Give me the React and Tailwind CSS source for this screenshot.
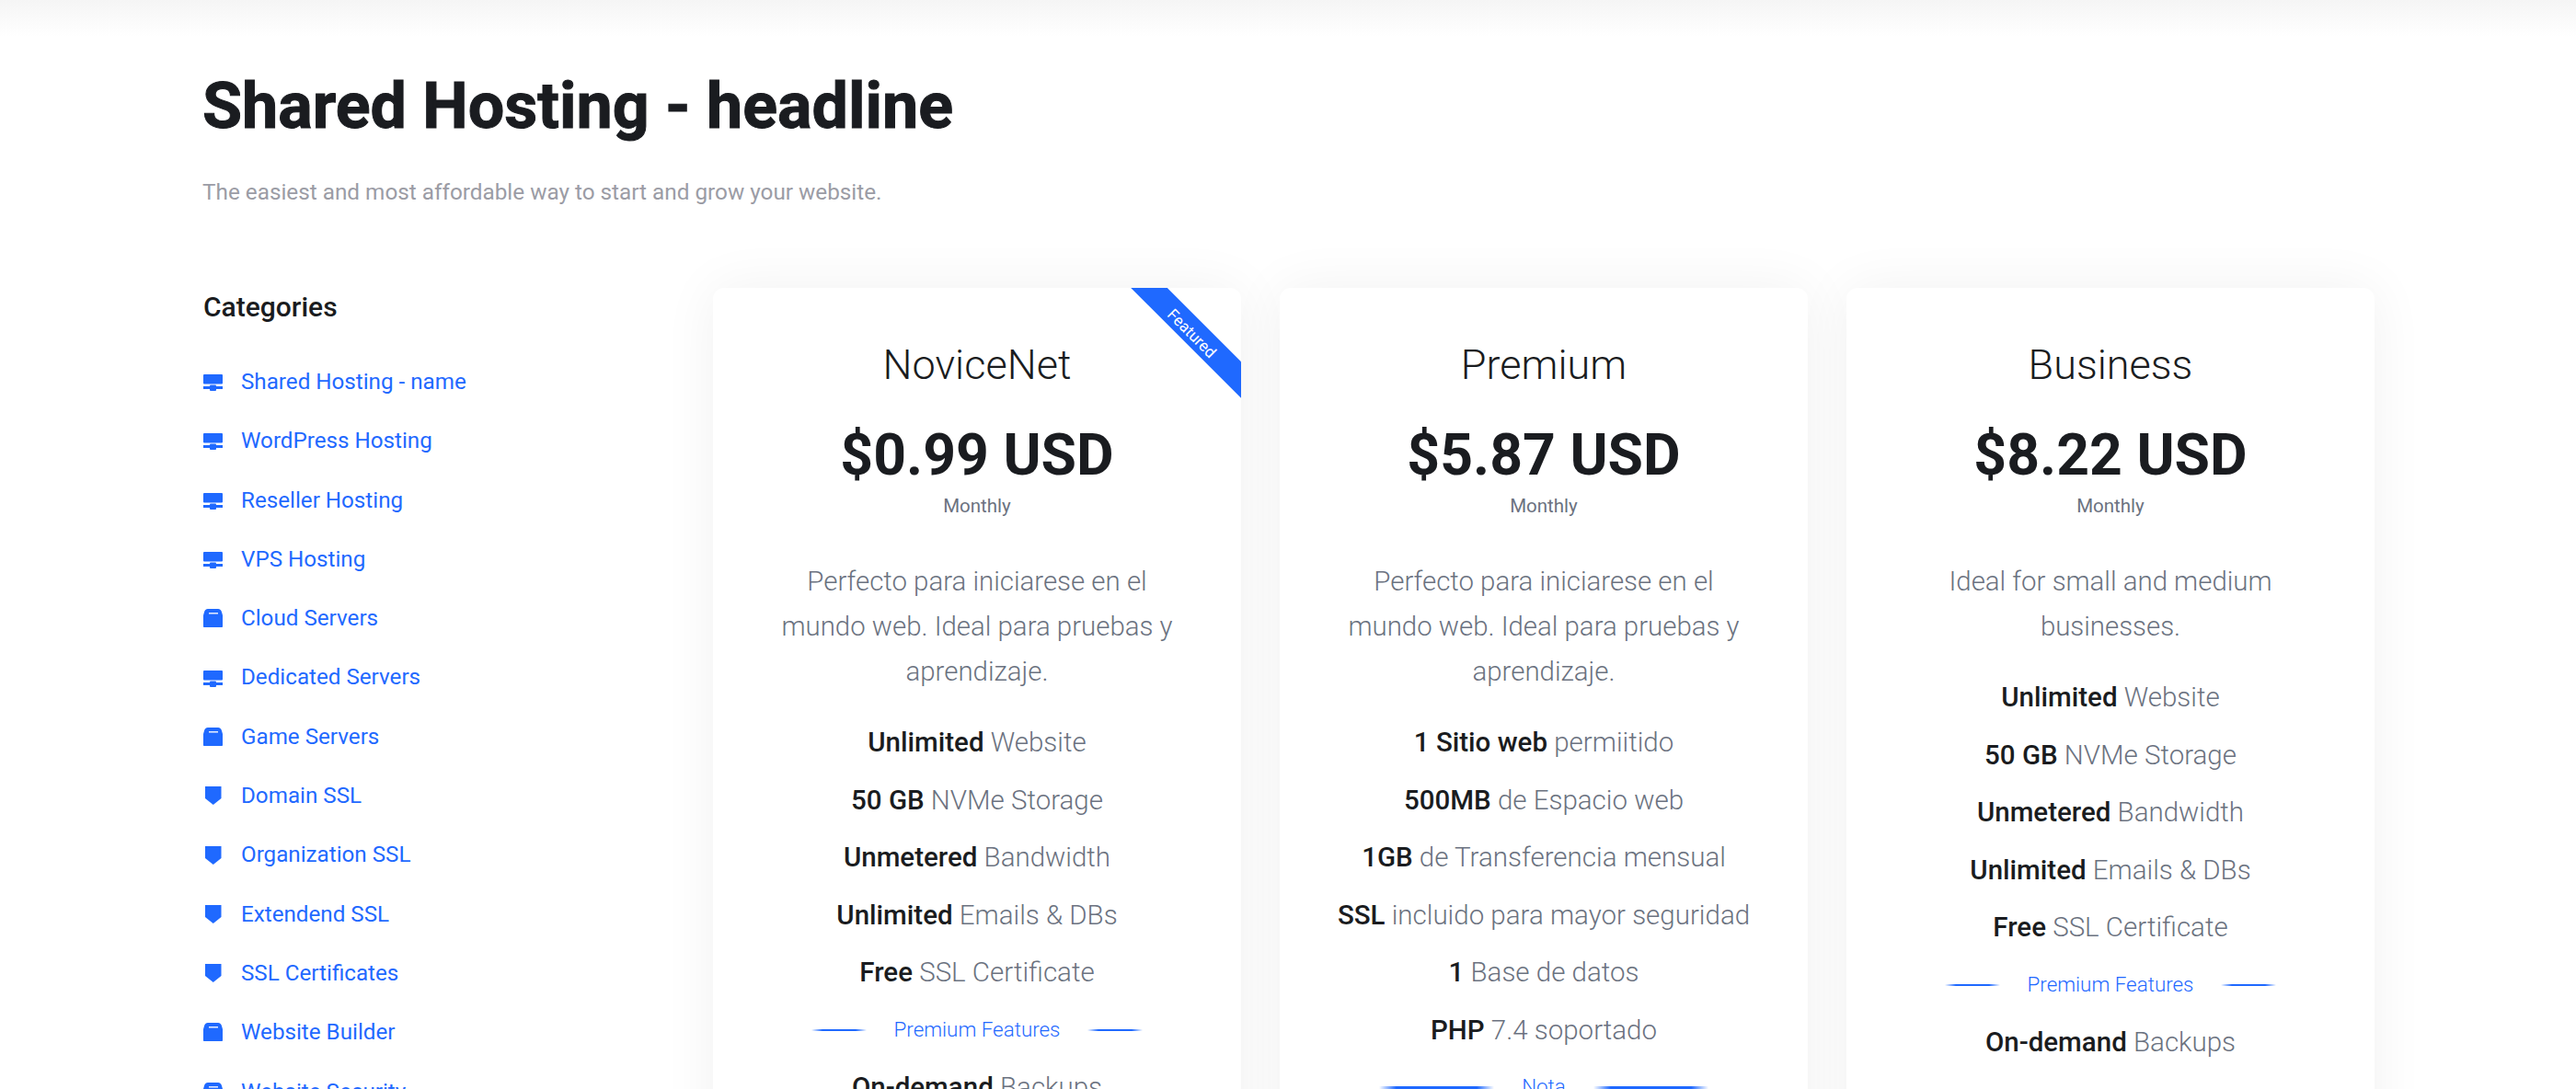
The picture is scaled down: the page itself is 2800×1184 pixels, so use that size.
const serverIcon = (
  <svg width="21" height="18" viewBox="0 0 21 18" fill="#1f69ff" className="shrink-0 translate-y-px">
    <rect x="0" y="0" width="21" height="10.5" rx="1" />
    <rect x="0" y="13" width="21" height="3" />
    <rect x="7" y="11.5" width="7" height="6.5" rx="1" />
  </svg>
);
const boxIcon = (
  <svg width="21" height="20" viewBox="0 0 21 20" className="shrink-0">
    <path d="M5 0H16C18 0 19.5 1.5 20 3.5L21 7V19C21 19.6 20.6 20 20 20H1C.4 20 0 19.6 0 19V7L1 3.5C1.5 1.5 3 0 5 0Z" fill="#1f69ff" />
    <rect x="6" y="4" width="10" height="1.6" fill="#dce7ff" />
  </svg>
);
const shieldIcon = (
  <svg width="21" height="20" viewBox="0 0 21 20" className="shrink-0">
    <path d="M2 0H19.5V13L10.75 20L2 13Z" fill="#1f69ff" />
  </svg>
);

const categories = [
  ["Shared Hosting - name", serverIcon],
  ["WordPress Hosting", serverIcon],
  ["Reseller Hosting", serverIcon],
  ["VPS Hosting", serverIcon],
  ["Cloud Servers", boxIcon],
  ["Dedicated Servers", serverIcon],
  ["Game Servers", boxIcon],
  ["Domain SSL", shieldIcon],
  ["Organization SSL", shieldIcon],
  ["Extendend SSL", shieldIcon],
  ["SSL Certificates", shieldIcon],
  ["Website Builder", boxIcon],
  ["Website Security", boxIcon],
];

const en = [
  ["Unlimited", "Website"],
  ["50 GB", "NVMe Storage"],
  ["Unmetered", "Bandwidth"],
  ["Unlimited", "Emails & DBs"],
  ["Free", "SSL Certificate"],
];
const premium = [["On-demand", "Backups"], ["Edge", "Network"]];

const plans = [
  {
    name: "NoviceNet",
    price: "$0.99 USD",
    desc: ["Perfecto para iniciarese en el", "mundo web. Ideal para pruebas y", "aprendizaje."],
    features: en,
    divider: "Premium Features",
    more: premium,
    featured: true,
  },
  {
    name: "Premium",
    price: "$5.87 USD",
    desc: ["Perfecto para iniciarese en el", "mundo web. Ideal para pruebas y", "aprendizaje."],
    features: [
      ["1 Sitio web", "permiitido"],
      ["500MB", "de Espacio web"],
      ["1GB", "de Transferencia mensual"],
      ["SSL", "incluido para mayor seguridad"],
      ["1", "Base de datos"],
      ["PHP", "7.4 soportado"],
    ],
    divider: "Nota",
    thick: true,
    more: [],
  },
  {
    name: "Business",
    price: "$8.22 USD",
    desc: ["Ideal for small and medium", "businesses."],
    features: en,
    divider: "Premium Features",
    more: premium,
  },
];

function Feature({ row }) {
  return (
    <div className="h-[62.5px] flex items-center justify-center text-[29.5px] leading-[40px] whitespace-nowrap font-light text-[#6b7280]">
      <span>
        <b className="font-medium text-[#1a1c20]">{row[0]}</b> {row[1]}
      </span>
    </div>
  );
}

function Divider({ label, thick }) {
  const line = thick
    ? "h-[3px] w-[125px] bg-[linear-gradient(90deg,transparent,#1f69ff_15%,#1f69ff_85%,transparent)]"
    : "h-[2px] w-[60px] bg-[linear-gradient(90deg,transparent,#1f69ff_20%,#1f69ff_80%,transparent)]";
  return (
    <div className="h-[62.5px] flex items-center justify-center gap-[30px] text-[22.4px] font-light text-[#1f69ff]">
      <span className={line} />
      <span className="whitespace-nowrap">{label}</span>
      <span className={line} />
    </div>
  );
}

function Card({ plan }) {
  return (
    <div className="relative w-[574px] shrink-0 h-[1200px] bg-white rounded-xl shadow-[0_0_60px_rgba(0,0,0,0.06)] overflow-hidden text-center pt-[58px]">
      {plan.featured && (
        <div className="absolute left-[422px] top-[34px] w-[200px] h-[28px] rotate-45 bg-[#1f69ff] text-white text-[17px] leading-[32px] font-normal">
          Featured
        </div>
      )}
      <div className="text-[45px] leading-[52px] font-light text-[#1a1c20]">{plan.name}</div>
      <div className="mt-[37px] text-[62.5px] leading-[70px] font-bold text-[#1a1c20]">{plan.price}</div>
      <div className="mt-[6px] text-[20.5px] leading-[28px] text-[#6b7280]">Monthly</div>
      <div className="mt-[44px] mb-[21px] text-[29.4px] leading-[49px] font-light text-[#6b7280]">
        {plan.desc.map((l) => (
          <div key={l}>{l}</div>
        ))}
      </div>
      {plan.features.map((r, i) => (
        <Feature key={i} row={r} />
      ))}
      <Divider label={plan.divider} thick={plan.thick} />
      {plan.more.map((r, i) => (
        <Feature key={i} row={r} />
      ))}
    </div>
  );
}

export default function App() {
  return (
    <div className="h-[1184px] overflow-hidden bg-white font-['Roboto',sans-serif]">
      <div className="h-[40px] bg-gradient-to-b from-[#f5f5f5] to-white" />
      <div className="pl-[220px]">
        <h1 className="mt-[31px] text-[70px] leading-[88px] font-bold text-[#1a1c20] [-webkit-text-stroke:1px_#1a1c20]">Shared Hosting - headline</h1>
        <p className="mt-[34px] text-[24.3px] leading-[32px] font-normal text-[#9b9ca5]">
          The easiest and most affordable way to start and grow your website.
        </p>
        <div className="mt-[88px] flex">
          <aside className="w-[555px] shrink-0">
            <h2 className="text-[30px] leading-[36px] font-medium text-[#1a1c20] mt-[3px] pl-px">Categories</h2>
            <ul className="mt-[31px]">
              {categories.map(([label, icon]) => (
                <li key={label} className="h-[64.3px] flex items-center pl-px text-[24.2px] text-[#1f69ff]">
                  <span className="w-[41px] flex">{icon}</span>
                  <span className="whitespace-nowrap">{label}</span>
                </li>
              ))}
            </ul>
          </aside>
          <div className="flex gap-[42px]">
            {plans.map((p) => (
              <Card key={p.name} plan={p} />
            ))}
          </div>
        </div>
      </div>
    </div>
  );
}
